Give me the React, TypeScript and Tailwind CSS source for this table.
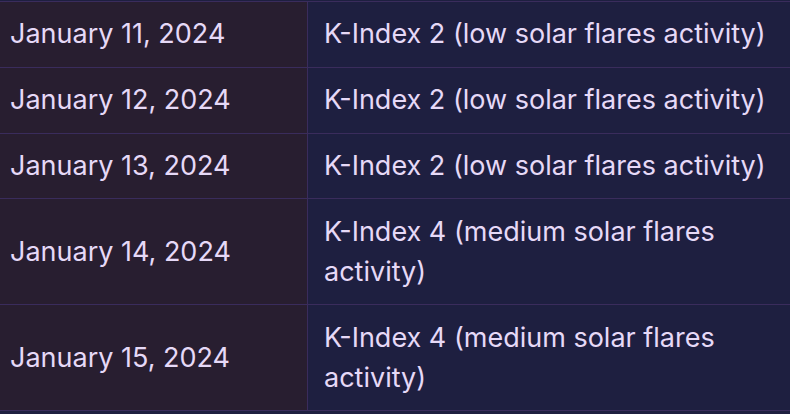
const rows = [
  ['January 11, 2024', 'K-Index 2 (low solar flares activity)'],
  ['January 12, 2024', 'K-Index 2 (low solar flares activity)'],
  ['January 13, 2024', 'K-Index 2 (low solar flares activity)'],
  ['January 14, 2024', 'K-Index 4 (medium solar flares activity)'],
  ['January 15, 2024', 'K-Index 4 (medium solar flares activity)'],
];

export default function App() {
  return (
    <div className="w-[790px] h-[414px] overflow-hidden bg-[#1e1f40] pt-px" style={{ fontFamily: 'Inter, "Noto Sans", sans-serif' }}>
      <div className="border-t border-[#3a2c5c] text-[27px] leading-[40px] text-[#e6d9f7]">
        {rows.map(([date, k]) => (
          <div key={date} className="flex border-b border-[#3a2c5c]">
            <div className="w-[308px] shrink-0 flex items-center bg-[#281e30] pl-[10px] pr-4 py-[12.4px] border-r border-[#3a2c5c]">
              {date}
            </div>
            <div className="flex-1 bg-[#1e1f40] pl-4 pr-5 py-[12.4px]">{k}</div>
          </div>
        ))}
      </div>
    </div>
  );
}
